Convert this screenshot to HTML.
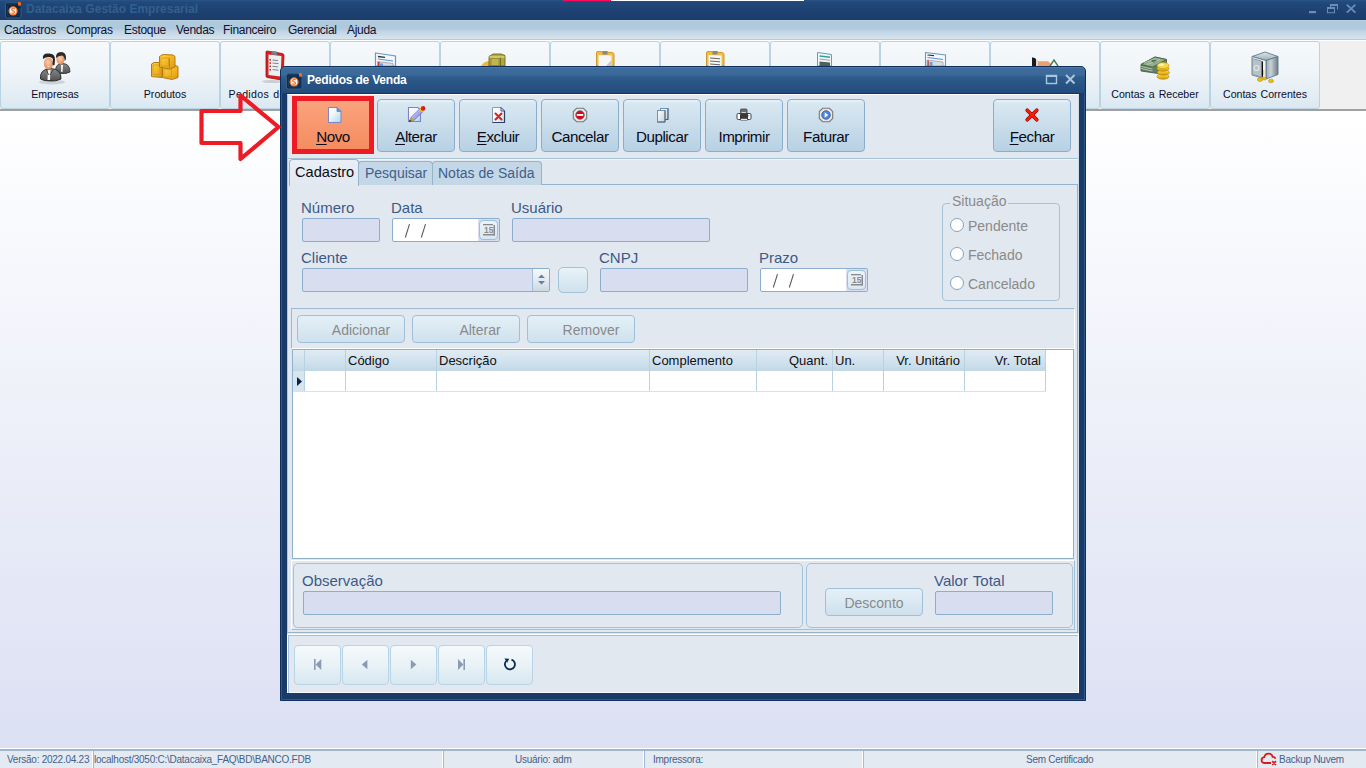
<!DOCTYPE html>
<html><head><meta charset="utf-8">
<style>
*{box-sizing:border-box;margin:0;padding:0}
html,body{width:1366px;height:768px;overflow:hidden;font-family:"Liberation Sans",sans-serif;background:#fff;position:relative}
.a{position:absolute}
#title{left:0;top:0;width:1366px;height:20px;background:linear-gradient(#2a5486,#22497b 2px,#1e4273 50%,#1b3c6b);}
#title .t{left:26px;top:2px;font-size:12px;font-weight:bold;color:#32608d;letter-spacing:0px;white-space:nowrap}
#menu{left:0;top:20px;width:1366px;height:20px;background:linear-gradient(#c0d5e5 0,#afc9dd 1px,#aec8dc 42%,#c2d6e5 62%,#d6e4ee 100%);border-bottom:1px solid #b4cadb}
#menu span{position:absolute;top:3px;font-size:12px;color:#101030;letter-spacing:-0.3px;white-space:nowrap}
#tbar{left:0;top:40px;width:1366px;height:71px;background:#f0f0f0;border-top:1px solid #fff;border-bottom:2px solid #a0a0a0}
.tb{position:absolute;top:0;width:110px;height:68px;border:1px solid #b9d3e4;border-radius:3px;background:linear-gradient(#f6f9fb,#eef4f8 50%,#dbe8f1)}
.tb .l{position:absolute;left:0;right:0;top:46px;word-spacing:1px;text-align:center;font-size:10.6px;color:#0c0c2a;white-space:nowrap}
#mdi{left:0;top:111px;width:1366px;height:637px;background:linear-gradient(#ffffff,#dbe0f3)}
#status{left:0;top:748px;width:1366px;height:20px;background:#e4eaf1;border-top:1px solid #fff}
#status .ln{position:absolute;left:0;top:0;width:1366px;height:2px;background:#9fb7ce}
#status span{position:absolute;top:5px;font-size:10px;color:#44618c;white-space:nowrap;letter-spacing:-0.25px}
#status .sep{position:absolute;top:2px;width:2px;height:17px;border-left:1px solid #fff;border-right:1px solid #a3bbd0}
</style></head><body>
<div id="title" class="a">
  <svg class="a" style="left:4px;top:1px" width="18" height="18" viewBox="0 0 18 18">
    <path d="M13 1.8 H3.5 Q1.5 1.8 1.5 3.8 V15 Q1.5 17 3.5 17 H15 Q17 17 17 15 V7" fill="#06264a" stroke="#3d5f7e" stroke-width="1"/>
    <path d="M12.5 3.8 H5 Q3.5 3.8 3.5 5.3 V13.5 Q3.5 15 5 15 H13.5 Q15 15 15 13.5 V7" fill="none" stroke="#1c4066" stroke-width="0.8"/>
    <circle cx="9.1" cy="9.9" r="4.6" fill="#f37a32"/>
    <circle cx="9.1" cy="9.9" r="3.3" fill="#fff2ea"/>
    <path d="M10.8 8 Q9.2 6.8 7.8 8 Q7.3 9.3 9.1 9.9 Q10.9 10.5 10.4 11.8 Q9 13 7.4 11.8" stroke="#f37a32" stroke-width="1.2" fill="none"/>
    <path d="M14 1 H16.2 L17 2.2 V4.4 H14Z" fill="#ff6a10"/>
  </svg>
  <div class="a t">Datacaixa Gestão Empresarial</div>
  <svg class="a" style="left:1300px;top:0" width="66" height="20" viewBox="1300 0 66 20">
    <rect x="1309" y="11" width="7" height="2.2" fill="#6a8cb6"/>
    <path d="M1330.5 9.5 V4.5 H1337.5 V9.5" fill="none" stroke="#6a8cb6" stroke-width="1"/>
    <rect x="1330" y="4" width="8" height="2" fill="#6a8cb6"/>
    <rect x="1327.5" y="7.5" width="7" height="5.2" fill="#1e4273" stroke="#6a8cb6" stroke-width="1"/>
    <rect x="1327" y="7" width="8" height="2" fill="#6a8cb6"/>
    <path d="M1346.8 4.6 L1355.4 12.6 M1355.4 4.6 L1346.8 12.6" stroke="#6a8cb6" stroke-width="1.9"/>
  </svg>
</div>
<div class="a" style="left:563px;top:0;width:48px;height:1px;background:#ff0a5a;z-index:5"></div>
<div class="a" style="left:611px;top:0;width:193px;height:1px;background:#fff;z-index:5"></div>
<div id="menu" class="a">
  <span style="left:4px">Cadastros</span>
  <span style="left:66px">Compras</span>
  <span style="left:124px">Estoque</span>
  <span style="left:176px">Vendas</span>
  <span style="left:223px">Financeiro</span>
  <span style="left:288px">Gerencial</span>
  <span style="left:347px">Ajuda</span>
</div>
<div id="tbar" class="a">
  <div class="tb" style="left:0"><div class="l">Empresas</div></div>
  <div class="tb" style="left:110px"><div class="l">Produtos</div></div>
  <div class="tb" style="left:220px"><div class="l" style="letter-spacing:0.3px">Pedidos de Venda</div></div>
  <div class="tb" style="left:330px"></div>
  <div class="tb" style="left:440px"></div>
  <div class="tb" style="left:550px"></div>
  <div class="tb" style="left:660px"></div>
  <div class="tb" style="left:770px"></div>
  <div class="tb" style="left:880px"></div>
  <div class="tb" style="left:990px"></div>
  <div class="tb" style="left:1100px"><div class="l">Contas a Receber</div></div>
  <div class="tb" style="left:1210px"><div class="l">Contas Correntes</div></div>
</div>
<div id="mdi" class="a"></div>
<!-- top toolbar icons -->
<svg class="a" style="left:36px;top:48px" width="40" height="40" viewBox="0 0 40 40">
  <defs>
    <radialGradient id="face" cx="0.45" cy="0.4" r="0.6"><stop offset="0" stop-color="#ffd0b0"/><stop offset="1" stop-color="#e08858"/></radialGradient>
    <linearGradient id="suit" x1="0" y1="0" x2="0" y2="1"><stop offset="0" stop-color="#8a8a8a"/><stop offset="1" stop-color="#505050"/></linearGradient>
  </defs>
  <ellipse cx="16" cy="34" rx="13" ry="2.5" fill="#000" opacity="0.12"/>
  <path d="M19.5 24 Q19 15.5 26.5 15.5 Q34 15.5 34 24 Q30 26 26 25.5 Q22 25.5 19.5 24Z" fill="url(#suit)" stroke="#2a2a2a" stroke-width="0.8"/>
  <path d="M25 17 L27 17 L26.6 24 L25.2 24Z" fill="#f4f4f4"/>
  <ellipse cx="24.5" cy="11.5" rx="4" ry="5" fill="url(#face)"/>
  <path d="M20 10 Q19.5 4 25 4 Q30.5 4 30 11 L28.8 13 Q28.5 8 26 7.5 Q22 7.8 20 10Z" fill="#2a2a2a"/>
  <path d="M4.5 31 Q3.5 21 14.5 20.5 Q25.5 21 25 31 Q20 33.5 14.5 33 Q8 33 4.5 31Z" fill="url(#suit)" stroke="#222" stroke-width="0.9"/>
  <path d="M12 22 L14.5 22 L14 32 L11.5 32Z" fill="#fafafa"/>
  <path d="M10 22 L13 27 M17 22 L14 27" stroke="#333" stroke-width="0.8"/>
  <ellipse cx="12.5" cy="15.5" rx="4.6" ry="6" fill="url(#face)"/>
  <path d="M7 11 Q6 5 12.5 5.5 Q19.5 5.2 19 12 L18.5 17 Q17 18 16.5 16 L17 11 Q15 8.5 12 9 Q9 9.3 7 11Z" fill="#262626"/>
  <path d="M11 18.3 L14 18.3 L12.5 19.3Z" fill="#fff"/>
</svg>
<svg class="a" style="left:145px;top:50px" width="40" height="35" viewBox="0 0 40 35">
  <defs><linearGradient id="gold" x1="0" y1="0" x2="1" y2="1"><stop offset="0" stop-color="#ffd54a"/><stop offset="0.6" stop-color="#eeb020"/><stop offset="1" stop-color="#d89a10"/></linearGradient></defs>
  <g stroke="#b57a10" stroke-width="1">
    <path d="M6.5 14 L9 12.5 L17 12.5 L17 27.5 L6.5 26.5Z" fill="url(#gold)"/>
    <rect x="8" y="15" width="7" height="9.5" fill="none" stroke="#d29a18" stroke-width="0.8"/>
    <path d="M17.5 17 L30 15.5 L33 16.5 L33 27.5 L27 29.5 L17.5 27.5Z" fill="url(#gold)"/>
    <rect x="19" y="19" width="7.5" height="8" fill="none" stroke="#d29a18" stroke-width="0.8"/>
    <path d="M14.5 6.5 L18 4.5 L28 5 L30 6.5 L30 17 L24.5 19 L14.5 17Z" fill="url(#gold)"/>
    <rect x="16" y="8" width="7.5" height="8" fill="none" stroke="#d29a18" stroke-width="0.8"/>
    <path d="M24.5 8 L24.5 18.5" stroke="#c08a10"/>
  </g>
</svg>
<svg class="a" style="left:255px;top:45px" width="30" height="42" viewBox="0 0 30 42">
  <ellipse cx="17" cy="36.5" rx="10" ry="1.6" fill="#000" opacity="0.14"/>
  <path d="M11 7 Q11 6 12 6 L27.5 8.5 Q29 9 29 10.5 L28 33.5 Q28 35 26.5 35 L12 32.5 Q11 32.3 11 31Z" fill="#d81e1e" stroke="#a01010" stroke-width="0.8"/>
  <path d="M13.5 9.5 L26.5 11 L25.5 31.5 L13.5 30Z" fill="#e8f0f4"/>
  <path d="M16.5 6 L22 6.5 L22 10 L16.5 9.5Z" fill="#7a8088"/>
  <g fill="#d01818"><rect x="14.5" y="14" width="1.4" height="1.6"/><rect x="14.5" y="17.3" width="1.4" height="1.6"/><rect x="14.5" y="20.5" width="1.4" height="1.6"/><rect x="14.5" y="24" width="1.4" height="1.6"/></g>
  <g stroke="#777" stroke-width="0.9"><path d="M17.5 15 L23 15.6"/><path d="M17.5 18 L23.5 18.6"/><path d="M17.5 21.3 L23 21.9"/><path d="M17.5 24.6 L23.5 25.2"/></g>
</svg>
<svg class="a" style="left:372px;top:50px" width="28" height="16" viewBox="0 0 28 16">
  <path d="M3.5 3 L23.5 6 L23.5 16 L3.5 16Z" fill="#f4f8fc" stroke="#6d9abb" stroke-width="1.2"/>
  <path d="M6 6.5 L13 7.3" stroke="#333" stroke-width="1.3"/>
  <path d="M6 9 L21 11" stroke="#5d8fde" stroke-width="1"/>
  <path d="M5.5 11.5 L21 13.5 L21 16 L5.5 16Z" fill="#d8dde2" stroke="#8a8a8a" stroke-width="0.6"/>
  <rect x="6" y="12" width="1.5" height="4" fill="#c83a20"/>
  <rect x="8" y="13.5" width="3" height="2.5" fill="#6a9ae0"/>
</svg>
<svg class="a" style="left:480px;top:53px" width="30" height="13" viewBox="0 0 30 13">
  <path d="M1 13 Q4 8 10 8 L10 13Z" fill="#f2b640"/>
  <path d="M9 3.5 L13 1 L21 1 L25 2.5 L25 13 L9 13Z" fill="#b0a640" stroke="#6e6a1c" stroke-width="0.9"/>
  <path d="M9.5 4 L24.5 4" stroke="#d8d080" stroke-width="1.5"/>
  <path d="M20.5 4.5 L20.5 13" stroke="#6e6a1c" stroke-width="0.9"/>
  <rect x="11" y="5.5" width="8" height="7" fill="#c4b450" stroke="#807a2a" stroke-width="0.6"/>
</svg>
<svg class="a" style="left:595px;top:50px" width="20" height="16" viewBox="0 0 20 16">
  <path d="M1.5 3 Q1.5 1.5 3 1.5 L17 2.5 Q19 2.8 19 4.5 L19 16 L1.5 16Z" fill="#f0c040" stroke="#c89020" stroke-width="0.9"/>
  <path d="M3.5 5 L16.5 5.5 L16.5 16 L3.5 16Z" fill="#f6f6f6"/>
  <path d="M16.5 10 L16.5 16 L11 16Z" fill="#c8c8c8"/>
  <rect x="7.5" y="1" width="5" height="3.5" fill="#888"/>
</svg>
<svg class="a" style="left:705px;top:50px" width="20" height="16" viewBox="0 0 20 16">
  <path d="M1.5 3 Q1.5 1.5 3 1.5 L17 2.5 Q19 2.8 19 4.5 L19 16 L1.5 16Z" fill="#f0c040" stroke="#c89020" stroke-width="0.9"/>
  <path d="M3.5 5 L16.5 5.5 L16.5 16 L3.5 16Z" fill="#f6f6f6"/>
  <path d="M5 8 L15 8.8 M5 11 L15 11.8 M5 14 L15 14.8" stroke="#555" stroke-width="0.9"/>
  <rect x="7.5" y="1" width="5" height="3.5" fill="#888"/>
</svg>
<svg class="a" style="left:816px;top:51px" width="18" height="15" viewBox="0 0 18 15">
  <path d="M1.5 1.5 L15.5 3.5 L15.5 15 L1.5 15Z" fill="#f2f6f8" stroke="#6d9abb" stroke-width="1"/>
  <path d="M3.5 5 L14 6.3" stroke="#30a0a0" stroke-width="1.6"/>
  <path d="M3.5 8 L14 9.3" stroke="#888" stroke-width="0.8"/>
  <path d="M3.5 10.5 L14 11.5 L14 15 L3.5 15Z" fill="#50605a"/>
</svg>
<svg class="a" style="left:924px;top:51px" width="24" height="15" viewBox="0 0 24 15">
  <path d="M1.5 1.5 L21.5 4 L21.5 15 L1.5 15Z" fill="#f4f8fc" stroke="#6d9abb" stroke-width="1.1"/>
  <path d="M3.5 4 L10 4.7" stroke="#333" stroke-width="1.2"/>
  <path d="M3.5 6.5 L19 8.5" stroke="#5d8fde" stroke-width="1"/>
  <path d="M3 9 L19 11 L19 15 L3 15Z" fill="#d8dde2" stroke="#8a8a8a" stroke-width="0.6"/>
  <rect x="3.5" y="9.5" width="1.3" height="5.5" fill="#c83a20"/>
  <rect x="5.5" y="11" width="3" height="4" fill="#6a9ae0"/>
</svg>
<svg class="a" style="left:1030px;top:56px" width="30" height="10" viewBox="0 0 30 10">
  <path d="M2 10 L2 1.5 Q4.5 1 6 3 L6 10Z" fill="#1a1a1a"/>
  <rect x="6" y="4" width="1.8" height="6" fill="#d8d8d8"/>
  <path d="M8 10 L8 5.2 L18 5.2 L21 8 L21 10Z" fill="#eca070"/>
  <path d="M20 10 L24 4 L28 10" fill="none" stroke="#4f7a4a" stroke-width="1.4"/>
</svg>
<svg class="a" style="left:1135px;top:50px" width="40" height="35" viewBox="0 0 40 35">
  <defs>
    <linearGradient id="coin" x1="0" y1="0" x2="0" y2="1"><stop offset="0" stop-color="#fff2a0"/><stop offset="0.5" stop-color="#f0c020"/><stop offset="1" stop-color="#c89010"/></linearGradient>
  </defs>
  <path d="M6 14.5 L20 7 L31.5 9.5 L31.5 12.5 L23 23.5 L6 21Z" fill="#62805f" stroke="#3e523e" stroke-width="0.8"/>
  <path d="M6 14.5 L20 7 L31.5 9.5 L17.5 17Z" fill="#93ae8e" stroke="#44603f" stroke-width="0.8"/>
  <path d="M16 11 Q19 9 22 10.5 L19 13Z" fill="#3f6a3f"/>
  <path d="M6 16.5 L17.5 19 M6 18.5 L17.5 21" stroke="#c4d4c0" stroke-width="0.8"/><path d="M9 13 L20 8.5 M12 14.5 L25 9.5" stroke="#c8dac4" stroke-width="0.6"/>
  <ellipse cx="28" cy="26.5" rx="6" ry="2.8" fill="url(#coin)" stroke="#b08010" stroke-width="0.6"/>
  <ellipse cx="28.5" cy="22.5" rx="6" ry="2.8" fill="url(#coin)" stroke="#b08010" stroke-width="0.6"/>
  <ellipse cx="28" cy="18.5" rx="6" ry="2.8" fill="url(#coin)" stroke="#b08010" stroke-width="0.6"/>
  <ellipse cx="28" cy="15.5" rx="6" ry="3" fill="#f8d848" stroke="#c09010" stroke-width="0.6"/>
  <ellipse cx="26.5" cy="14.8" rx="2.5" ry="1.2" fill="#fff8c0"/>
</svg>
<svg class="a" style="left:1245px;top:48px" width="40" height="40" viewBox="0 0 40 40">
  <defs>
    <linearGradient id="steel" x1="0" y1="0" x2="1" y2="0"><stop offset="0" stop-color="#9aa6ae"/><stop offset="0.4" stop-color="#c8d2d8"/><stop offset="1" stop-color="#707c84"/></linearGradient>
    <linearGradient id="steel2" x1="0" y1="0" x2="0" y2="1"><stop offset="0" stop-color="#dfe6ea"/><stop offset="1" stop-color="#a0acb4"/></linearGradient>
  </defs>
  <path d="M7 8.5 L20 4 L33 8.5 L21 12.5Z" fill="url(#steel2)" stroke="#5a7a90" stroke-width="0.9"/>
  <path d="M21 12.5 L33 8.5 L33 26.5 L21 31Z" fill="url(#steel)" stroke="#5a7a90" stroke-width="0.9"/>
  <path d="M7 8.5 L21 12.5 L21 31 L7 27Z" fill="#f0f4f6" stroke="#5a7a90" stroke-width="0.9"/>
  <path d="M9 11 L18 13.5 L18 29 L9 26.5Z" fill="#0e0e0e"/>
  <path d="M7.5 10.5 L16.5 13 L16.5 29 L7.5 26.5Z" fill="#b6c2c8" stroke="#7a8a94" stroke-width="0.6"/>
  <circle cx="11.5" cy="20" r="2.5" fill="none" stroke="#e0e6ea" stroke-width="1.2"/>
  <rect x="18.3" y="22" width="0.9" height="5" fill="#e8c020"/>
  <ellipse cx="15" cy="31.5" rx="2.6" ry="2" fill="#e8bc18" stroke="#b08a08" stroke-width="0.5"/>
  <ellipse cx="19.3" cy="30.5" rx="2" ry="1.6" fill="#e8bc18" stroke="#b08a08" stroke-width="0.5"/>
  <ellipse cx="26" cy="33" rx="2.6" ry="1.8" fill="#e8bc18" stroke="#b08a08" stroke-width="0.5"/>
</svg>

<div id="status" class="a">
  <div class="ln"></div>
  <span style="left:7px">Versão: 2022.04.23</span>
  <div class="sep" style="left:92px"></div>
  <span style="left:94px">localhost/3050:C:\Datacaixa_FAQ\BD\BANCO.FDB</span>
  <div class="sep" style="left:442px"></div>
  <span style="left:515px">Usuário: adm</span>
  <div class="sep" style="left:643px"></div>
  <span style="left:653px">Impressora:</span>
  <div class="sep" style="left:862px"></div>
  <span style="left:1026px">Sem Certificado</span>
  <div class="sep" style="left:1256px"></div>
  <span style="left:1279px">Backup Nuvem</span>
</div>
<style>
#dlg{left:280px;top:66px;width:806px;height:635px;background:#1a3a68;border-radius:5px 5px 0 0;border:1px solid #0e2f5e;box-shadow:inset 1px 0 0 #2d5a8a,inset -1px 0 0 #2d5a8a,inset 0 -1px 0 #2d5a8a}
#dlgtb{left:281px;top:67px;width:804px;height:26px;border-radius:4px 4px 0 0;background:linear-gradient(#5a8ab4 0,#3e6c9c 1px,#3a6898 8px,#2e5c8c 10px,#2a5787 14px,#224b7c 26px)}
#dlgt{left:307px;top:73px;font-size:12px;font-weight:bold;color:#fff;letter-spacing:-0.2px;white-space:nowrap}
#cont{left:287px;top:94px;width:792px;height:599px;background:#e2e8f0;border-left:1px solid #a9c7dc;border-top:1px solid #fff;border-right:1px solid #cddcea;border-bottom:1px solid #f4f8fb}
.btn{position:absolute;top:99px;width:78px;height:53px;border:1px solid #89aecb;border-radius:4px;background:linear-gradient(#e8f2f8 0,#d8e8f2 3px,#c9ddea 50%,#b7d1e4 100%)}
.btn .tx{position:absolute;left:0;right:0;top:28px;text-align:center;font-size:15.2px;letter-spacing:-0.45px;color:#0a0a18;white-space:nowrap}
.btn .ic{position:absolute;left:0;top:0}
u{text-decoration:underline;text-decoration-thickness:1px;text-underline-offset:1.5px;}
.lbl{position:absolute;font-size:15px;word-spacing:1px;color:#3c5a88;white-space:nowrap}
.inp{position:absolute;height:24px;background:#d9ddf0;border:1px solid #8aaecb;border-radius:2px}
.pnl{position:absolute;border:1px solid #9cbad2}
.sb{position:absolute;height:28px;border:1px solid #9fc0d8;border-radius:4px;background:linear-gradient(#e4f0f7,#cfe1ed);font-size:14px;color:#8a8a8a;text-align:center;line-height:28px}
.gh{position:absolute;top:351px;height:21px;font-size:13px;color:#101010;line-height:20px;white-space:nowrap}
.nb{position:absolute;top:645px;width:47px;height:40px;border:1px solid #b9d4e6;border-radius:4px;background:linear-gradient(#f5f9fb,#e9f2f7 50%,#d7e7f0)}
</style>
<div id="dlg" class="a"></div>
<div id="dlgtb" class="a"></div>
<svg class="a" style="left:285px;top:72px" width="18" height="18" viewBox="0 0 18 18">
  <path d="M13 1.8 H3.5 Q1.5 1.8 1.5 3.8 V15 Q1.5 17 3.5 17 H15 Q17 17 17 15 V7" fill="#0b2c50" stroke="#3d5f7e" stroke-width="1"/>
  <path d="M12.5 3.8 H5 Q3.5 3.8 3.5 5.3 V13.5 Q3.5 15 5 15 H13.5 Q15 15 15 13.5 V7" fill="none" stroke="#1c4066" stroke-width="0.8"/>
  <circle cx="9.1" cy="9.9" r="4.6" fill="#f37a32"/>
  <circle cx="9.1" cy="9.9" r="3.3" fill="#fff2ea"/>
  <path d="M10.8 8 Q9.2 6.8 7.8 8 Q7.3 9.3 9.1 9.9 Q10.9 10.5 10.4 11.8 Q9 13 7.4 11.8" stroke="#f37a32" stroke-width="1.2" fill="none"/>
  <path d="M14 1 H16.2 L17 2.2 V4.4 H14Z" fill="#ff6a10"/>
</svg>
<div id="dlgt" class="a">Pedidos de Venda</div>
<svg class="a" style="left:1044px;top:73px" width="34" height="14" viewBox="0 0 34 14">
  <rect x="2.5" y="2.5" width="10" height="8" fill="none" stroke="#a9c8e0" stroke-width="1.4"/>
  <rect x="2" y="2" width="11" height="2" fill="#a9c8e0"/>
  <path d="M22 2 L30.5 10.5 M30.5 2 L22 10.5" stroke="#a9c8e0" stroke-width="2"/>
</svg>
<div class="a" style="left:286px;top:93px;width:794px;height:1px;background:#0e3468"></div>
<div id="cont" class="a"></div>
<!-- toolbar bottom line -->
<div class="a" style="left:288px;top:158px;width:790px;height:1px;background:#a6c0d6"></div>
<div class="a" style="left:288px;top:159px;width:790px;height:1px;background:#f2f6f9"></div>

<!-- red box Novo -->
<div class="a" style="left:292px;top:96px;width:82px;height:58px;border:5px solid #ed1c24;background:linear-gradient(#faa37d,#f58c60)"></div>
<div class="a" style="left:297px;top:128px;width:72px;text-align:center;font-size:15.2px;letter-spacing:-0.45px;color:#0a0a18"><u>N</u>ovo</div>

<div class="btn" style="left:377px"><div class="tx"><u>A</u>lterar</div></div>
<div class="btn" style="left:459px"><div class="tx"><u>E</u>xcluir</div></div>
<div class="btn" style="left:541px"><div class="tx">Cancelar</div></div>
<div class="btn" style="left:623px"><div class="tx">Duplicar</div></div>
<div class="btn" style="left:705px"><div class="tx">Imprimir</div></div>
<div class="btn" style="left:787px"><div class="tx">Faturar</div></div>
<div class="btn" style="left:993px"><div class="tx"><u>F</u>echar</div></div>

<!-- tabs -->
<div class="a" style="left:289px;top:184px;width:789px;height:1px;background:#94b4cd"></div>
<div class="a" style="left:358px;top:161px;width:75px;height:24px;border:1px solid #94b4cd;border-bottom:none;border-radius:4px 4px 0 0;background:#c3d7e6"></div>
<div class="a" style="left:432px;top:161px;width:110px;height:24px;border:1px solid #94b4cd;border-bottom:none;border-radius:4px 4px 0 0;background:#c3d7e6"></div>
<div class="a" style="left:289px;top:159px;width:70px;height:27px;border:1px solid #94b4cd;border-bottom:none;border-radius:4px 4px 0 0;background:linear-gradient(#eaeff6,#e2e8f0)"></div>
<div class="a" style="left:295px;top:163.5px;font-size:14.6px;color:#0a0a18">Cadastro</div>
<div class="a" style="left:365px;top:165px;font-size:14px;color:#3e5f8e">Pesquisar</div>
<div class="a" style="left:438px;top:165px;font-size:14px;color:#3e5f8e">Notas de Saída</div>

<!-- form -->
<div class="lbl" style="left:301px;top:199px">Número</div>
<div class="inp" style="left:302px;top:218px;width:78px"></div>
<div class="lbl" style="left:391px;top:199px">Data</div>
<div class="inp" style="left:392px;top:218px;width:108px;background:#fff"></div>
<div class="lbl" style="left:511px;top:199px">Usuário</div>
<div class="inp" style="left:512px;top:218px;width:198px"></div>

<div class="lbl" style="left:301px;top:249px">Cliente</div>
<div class="inp" style="left:302px;top:268px;width:248px"></div>
<div class="lbl" style="left:599px;top:249px">CNPJ</div>
<div class="inp" style="left:600px;top:268px;width:148px"></div>
<div class="lbl" style="left:759px;top:249px">Prazo</div>
<div class="inp" style="left:760px;top:268px;width:108px;background:#fff"></div>

<!-- situacao -->
<div class="a" style="left:942px;top:203px;width:118px;height:98px;border:1px solid #a6c2d8;border-radius:4px"></div>
<div class="a" style="left:950px;top:193px;padding:0 2px;background:#e2e8f0;font-size:14px;color:#8a8a8a">Situação</div>

<!-- buttons panel -->
<div class="pnl" style="left:291px;top:308px;width:784px;height:41px;border-right-color:#fff;border-bottom-color:#fff"></div>
<div class="sb" style="left:297px;top:315px;width:108px;padding-left:20px">Adicionar</div>
<div class="sb" style="left:412px;top:315px;width:108px;padding-left:28px">Alterar</div>
<div class="sb" style="left:527px;top:315px;width:108px;padding-left:20px">Remover</div>

<!-- grid -->
<div class="a" style="left:292px;top:349px;width:782px;height:210px;background:#fff;border:1px solid #8fb1cb"></div>

<!-- bottom panels -->
<div class="a" style="left:1077px;top:184px;width:1px;height:449px;background:#94b4cd"></div>
<div class="a" style="left:288px;top:632px;width:790px;height:1px;background:#94b4cd"></div>
<div class="a" style="left:291px;top:560px;width:784px;height:70px;border-top:1px solid #fff;border-left:1px solid #fff;border-right:1px solid #a4bed4;border-bottom:1px solid #a4bed4"></div>
<div class="a" style="left:293px;top:563px;width:510px;height:65px;border:1px solid #a6c2d8;border-radius:5px"></div>
<div class="lbl" style="left:302px;top:572px">Observação</div>
<div class="inp" style="left:303px;top:591px;width:478px"></div>
<div class="a" style="left:806px;top:563px;width:267px;height:65px;border:1px solid #a6c2d8;border-radius:5px"></div>
<div class="sb" style="left:825px;top:588px;width:98px">Desconto</div>
<div class="lbl" style="left:934px;top:572px">Valor Total</div>
<div class="inp" style="left:935px;top:591px;width:118px"></div>

<!-- nav panel -->
<div class="a" style="left:287px;top:634px;width:792px;height:59px;border-top:1px solid #fff;border-right:1px solid #fff;border-left:1px solid #fff"></div>
<div class="a" style="left:288px;top:635px;width:790px;height:58px;border-top:1px solid #a6c0d6;border-left:1px solid #a6c0d6"></div>
<div class="nb" style="left:294px"></div>
<div class="nb" style="left:342px"></div>
<div class="nb" style="left:390px"></div>
<div class="nb" style="left:438px"></div>
<div class="nb" style="left:486px"></div>

<!-- dialog toolbar icons -->
<svg class="a" style="left:326px;top:105px" width="18" height="20" viewBox="0 0 18 20">
  <defs><linearGradient id="pg1" x1="0" y1="0" x2="1" y2="1"><stop offset="0" stop-color="#fff"/><stop offset="0.4" stop-color="#f0f6fc"/><stop offset="1" stop-color="#a6d4ee"/></linearGradient></defs>
  <path d="M2.5 2.5 H11 L15 6.5 V17.5 H2.5 Z" fill="url(#pg1)" stroke="#7a86c6" stroke-width="1"/>
  <path d="M11 2.5 V6.5 H15 Z" fill="#4f9de6" stroke="#6f7fc0" stroke-width="0.8"/>
</svg>
<svg class="a" style="left:406px;top:105px" width="20" height="19" viewBox="0 0 20 19">
  <defs><linearGradient id="pg2" x1="0" y1="0" x2="1" y2="1"><stop offset="0" stop-color="#fff"/><stop offset="0.5" stop-color="#eef4fb"/><stop offset="1" stop-color="#9fd2ef"/></linearGradient></defs>
  <path d="M2.5 2.5 H12 L14.5 5 V16.5 H2.5 Z" fill="url(#pg2)" stroke="#7a84c6" stroke-width="1.1"/>
  <path d="M3.2 16.6 L5.3 12 L14.3 3.6 L17.2 6.4 L8.3 15 Z" fill="#a4a4ec" stroke="#5a5aa6" stroke-width="0.7"/>
  <path d="M6 12.4 L15 4.2" stroke="#c8c8f8" stroke-width="0.9"/>
  <path d="M3.2 16.6 L5.3 12 L8.3 15 Z" fill="#d8a418"/>
  <path d="M3 17 L4 14.8 L5.3 16 Z" fill="#1a1a1a"/>
  <path d="M13.2 4.6 L15.2 2.6 L18.2 5.5 L16.2 7.5 Z" fill="#f4c400"/>
  <circle cx="17.1" cy="3.4" r="2.3" fill="#dc1e10"/>
</svg>
<svg class="a" style="left:490px;top:105px" width="18" height="20" viewBox="0 0 18 20">
  <defs><linearGradient id="pg3" x1="0" y1="0" x2="1" y2="1"><stop offset="0" stop-color="#fff"/><stop offset="0.6" stop-color="#f2f4fa"/><stop offset="1" stop-color="#c9d2e6"/></linearGradient></defs>
  <path d="M2.5 2.5 H11 L14.5 6 V17.5 H2.5 Z" fill="url(#pg3)" stroke="#8a9ab8" stroke-width="1"/>
  <path d="M14.5 6 V17.5 H2.5" fill="none" stroke="#2a3e66" stroke-width="1.2"/>
  <path d="M11 2.5 L14.5 6 H11 Z" fill="#fff" stroke="#2a3e66" stroke-width="0.9"/>
  <path d="M5.5 8.5 L11.5 14.5 M11.5 8.5 L5.5 14.5" stroke="#d8241a" stroke-width="2.1" stroke-linecap="round"/>
</svg>
<svg class="a" style="left:572px;top:107px" width="16" height="16" viewBox="0 0 16 16">
  <path d="M4.6 1.3 H11.4 L14.7 4.6 V11.4 L11.4 14.7 H4.6 L1.3 11.4 V4.6 Z" fill="#e6e6e6" stroke="#7a7a7a" stroke-width="1.1"/>
  <circle cx="8" cy="8" r="4.3" fill="#e3001b" stroke="#606060" stroke-width="0.7"/>
  <rect x="4.8" y="7" width="6.4" height="1.9" fill="#f2fff8"/>
</svg>
<svg class="a" style="left:656px;top:107px" width="14" height="17" viewBox="0 0 14 17">
  <defs><linearGradient id="pg4" x1="0" y1="0" x2="1" y2="1"><stop offset="0" stop-color="#fff"/><stop offset="1" stop-color="#c6d2da"/></linearGradient></defs>
  <rect x="4.5" y="1.5" width="7.5" height="11" fill="url(#pg4)" stroke="#6f94ae" stroke-width="1"/>
  <path d="M4.5 12.5 H12 V1.5" fill="none" stroke="#3e5566" stroke-width="0.9"/>
  <rect x="1.5" y="3.5" width="7.5" height="11.5" fill="url(#pg4)" stroke="#6f94ae" stroke-width="1"/>
  <path d="M1.5 15 H9 V3.5" fill="none" stroke="#4a5f70" stroke-width="0.9"/>
</svg>
<svg class="a" style="left:736px;top:108px" width="16" height="14" viewBox="0 0 16 14">
  <rect x="4.5" y="1" width="6.5" height="4.5" rx="0.8" fill="#707070" stroke="#444" stroke-width="0.8"/>
  <rect x="5.5" y="4.3" width="4.5" height="1.3" fill="#fff"/>
  <rect x="1" y="5.5" width="14" height="6" rx="1.2" fill="#fff" stroke="#444" stroke-width="1"/>
  <rect x="4" y="5.5" width="8" height="7" rx="1" fill="#3a3a3a"/>
  <rect x="4.8" y="10.8" width="6.4" height="1.3" fill="#d8f4f4"/>
  <rect x="12.2" y="7.3" width="1" height="1" fill="#5070f0"/>
</svg>
<svg class="a" style="left:818px;top:107px" width="16" height="16" viewBox="0 0 16 16">
  <path d="M4.6 1.3 H11.4 L14.7 4.6 V11.4 L11.4 14.7 H4.6 L1.3 11.4 V4.6 Z" fill="#e6e6e6" stroke="#7a7a7a" stroke-width="1.1"/>
  <circle cx="8" cy="8" r="4.3" fill="#4a86e8" stroke="#3a4a6a" stroke-width="0.7"/>
  <path d="M6.7 5.3 L10.2 8 L6.7 10.7 Z" fill="#fff"/>
</svg>
<svg class="a" style="left:1024px;top:107px" width="16" height="16" viewBox="0 0 16 16">
  <path d="M3.2 3.2 L12.8 12.8 M12.8 3.2 L3.2 12.8" stroke="#8a0000" stroke-width="3.6" stroke-linecap="round"/>
  <path d="M3.2 3.2 L12.8 12.8 M12.8 3.2 L3.2 12.8" stroke="#ff1a00" stroke-width="2.4" stroke-linecap="round"/>
</svg>
<!-- calendar buttons -->
<div class="a" style="left:478px;top:219px;width:21px;height:22px;background:#dcdcf0"></div>
<div class="a" style="left:479px;top:220px;width:19px;height:20px;border:1px solid #9ec0d8;border-radius:4px;background:linear-gradient(#eaf4fa,#d8e8f2)"></div>
<svg class="a" style="left:483px;top:224px" width="12" height="12" viewBox="0 0 12 12">
  <rect x="0" y="0" width="10" height="1.3" fill="#8a8a8a"/>
  <rect x="0" y="10" width="12" height="1.5" fill="#8a8a8a"/>
  <rect x="10.5" y="1" width="1.5" height="10.5" fill="#8a8a8a"/>
  <text x="1" y="8.8" font-family="Liberation Sans" font-size="8.5" font-weight="bold" fill="#8a8a8a">15</text>
</svg>
<div class="a" style="left:846px;top:269px;width:21px;height:22px;background:#dcdcf0"></div>
<div class="a" style="left:847px;top:270px;width:19px;height:20px;border:1px solid #9ec0d8;border-radius:4px;background:linear-gradient(#eaf4fa,#d8e8f2)"></div>
<svg class="a" style="left:851px;top:274px" width="12" height="12" viewBox="0 0 12 12">
  <rect x="0" y="0" width="10" height="1.3" fill="#8a8a8a"/>
  <rect x="0" y="10" width="12" height="1.5" fill="#8a8a8a"/>
  <rect x="10.5" y="1" width="1.5" height="10.5" fill="#8a8a8a"/>
  <text x="1" y="8.8" font-family="Liberation Sans" font-size="8.5" font-weight="bold" fill="#8a8a8a">15</text>
</svg>
<svg class="a" style="left:400px;top:222px" width="30" height="18" viewBox="0 0 30 18">
  <path d="M9.5 2.2 L5.3 15.5 M25.5 2.2 L21.3 15.5" stroke="#5a5a5a" stroke-width="1.1"/>
</svg>
<svg class="a" style="left:768px;top:272px" width="30" height="18" viewBox="0 0 30 18">
  <path d="M9.5 2.2 L5.3 15.5 M25.5 2.2 L21.3 15.5" stroke="#5a5a5a" stroke-width="1.1"/>
</svg>
<!-- combobox spin -->
<div class="a" style="left:532px;top:269px;width:17px;height:22px;border-left:1px solid #a0c0d8;background:linear-gradient(#f6f8fa,#e0e8ee 60%,#ccd8e2)"></div>
<svg class="a" style="left:537px;top:273px" width="9" height="13" viewBox="0 0 9 13">
  <path d="M1 5 L4.5 1.6 L8 5Z M1 8 L4.5 11.4 L8 8Z" fill="#5f82a8"/>
</svg>
<!-- small button -->
<div class="a" style="left:558px;top:267px;width:30px;height:26px;border:1px solid #a2c2d8;border-radius:5px;background:linear-gradient(#e8f2f8,#d0e2ee)"></div>

<!-- radios -->
<div class="a" style="left:950px;top:218px;width:14px;height:14px;border:1px solid #7ea6c8;border-radius:50%;background:#fff"></div>
<div class="a" style="left:950px;top:247px;width:14px;height:14px;border:1px solid #7ea6c8;border-radius:50%;background:#fff"></div>
<div class="a" style="left:950px;top:276px;width:14px;height:14px;border:1px solid #7ea6c8;border-radius:50%;background:#fff"></div>
<div class="a" style="left:968px;top:218px;font-size:14px;color:#8a8a8a">Pendente</div>
<div class="a" style="left:968px;top:247px;font-size:14px;color:#8a8a8a">Fechado</div>
<div class="a" style="left:968px;top:276px;font-size:14px;color:#8a8a8a">Cancelado</div>

<!-- grid header -->
<div class="a" style="left:293px;top:350px;width:753px;height:21px;background:linear-gradient(#e0ecf4,#d8e6f0 30%,#cfe1ed 60%,#c2d8e7)"></div>
<div class="a" style="left:293px;top:371px;width:12px;height:20px;background:#d6e5ef"></div>
<div class="a" style="left:293px;top:391px;width:753px;height:1px;background:#d4e3ec"></div>
<div class="a" style="left:304px;top:350px;width:1px;height:41px;background:#b9d2e2"></div>
<div class="a" style="left:345px;top:350px;width:1px;height:41px;background:#b9d2e2"></div>
<div class="a" style="left:436px;top:350px;width:1px;height:41px;background:#b9d2e2"></div>
<div class="a" style="left:649px;top:350px;width:1px;height:41px;background:#b9d2e2"></div>
<div class="a" style="left:756px;top:350px;width:1px;height:41px;background:#b9d2e2"></div>
<div class="a" style="left:832px;top:350px;width:1px;height:41px;background:#b9d2e2"></div>
<div class="a" style="left:883px;top:350px;width:1px;height:41px;background:#b9d2e2"></div>
<div class="a" style="left:964px;top:350px;width:1px;height:41px;background:#b9d2e2"></div>
<div class="a" style="left:1045px;top:350px;width:1px;height:41px;background:#b9d2e2"></div>
<div class="gh" style="left:348px">Código</div>
<div class="gh" style="left:439px">Descrição</div>
<div class="gh" style="left:652px">Complemento</div>
<div class="gh" style="left:760px;width:68px;text-align:right">Quant.</div>
<div class="gh" style="left:835px">Un.</div>
<div class="gh" style="left:886px;width:74px;text-align:right;">Vr. Unitário</div>
<div class="gh" style="left:967px;width:74px;text-align:right;">Vr. Total</div>
<svg class="a" style="left:296px;top:376px" width="8" height="11" viewBox="0 0 8 11">
  <path d="M1 1 L6 5.5 L1 10Z" fill="#0e2248"/>
</svg>

<!-- nav icons -->
<svg class="a" style="left:312px;top:657px" width="12" height="14" viewBox="0 0 12 14">
  <rect x="2" y="2" width="1.6" height="11" fill="#8a9bb2"/><path d="M3.6 7.5 L9.3 2 L9.3 13Z" fill="#8a9bb2"/>
</svg>
<svg class="a" style="left:360px;top:657px" width="10" height="14" viewBox="0 0 10 14">
  <path d="M1.8 7.5 L7.4 2.8 L7.4 12.2Z" fill="#8a9bb2"/>
</svg>
<svg class="a" style="left:409px;top:657px" width="10" height="14" viewBox="0 0 10 14">
  <path d="M7.4 7.5 L1.8 2.8 L1.8 12.2Z" fill="#8a9bb2"/>
</svg>
<svg class="a" style="left:456px;top:657px" width="12" height="14" viewBox="0 0 12 14">
  <rect x="7.4" y="2" width="1.6" height="11" fill="#8a9bb2"/><path d="M7.4 7.5 L2 2 L2 13Z" fill="#8a9bb2"/>
</svg>
<svg class="a" style="left:502px;top:657px" width="15" height="14" viewBox="0 0 15 14">
  <path d="M4.2 4 A5 5 0 1 0 9.5 2.6" fill="none" stroke="#0c2a52" stroke-width="1.8"/>
  <path d="M2.4 1.5 L7.2 1.8 L5.2 5.8Z" fill="#0c2a52"/>
</svg>
<!-- status cloud -->
<svg class="a" style="left:1260px;top:752px" width="18" height="15" viewBox="0 0 18 15">
  <path d="M11 11 H4.8 Q1.6 11 1.6 8 Q1.6 5.6 4.3 5.2 Q5 1.7 8.6 1.7 Q12 1.7 12.6 4.9 Q14.8 5 15.6 6.6" fill="none" stroke="#d41c1c" stroke-width="1.8"/>
  <path d="M12.2 9.2 L16 13 M16 9.2 L12.2 13" stroke="#d41c1c" stroke-width="1.7"/>
</svg>


<!-- red arrow -->
<svg class="a" style="left:195px;top:88px" width="92" height="80" viewBox="195 88 92 80">
  <path d="M201.5 111 L240.5 111 L240.5 95.5 L278.5 127 L240.5 159 L240.5 143 L201.5 143 Z" fill="none" stroke="#ed1c24" stroke-width="4.2" stroke-linejoin="round"/>
</svg>

</body></html>
